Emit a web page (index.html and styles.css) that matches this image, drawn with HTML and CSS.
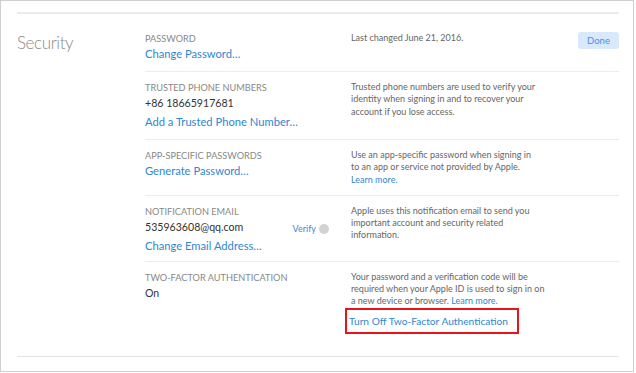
FILE: index.html
```html
<!DOCTYPE html>
<html lang="en">
<head>
<meta charset="utf-8">
<title>Security</title>
<link rel="stylesheet" href="styles.css">
</head>
<body>
<div class="frame">
  <div class="panel">
    <section class="section">
      <h2 class="heading">Security</h2>
      <div class="rows">
        <div class="row row-first">
          <div class="col-main">
            <div class="label">PASSWORD</div>
            <a class="link" href="#">Change Password…</a>
          </div>
          <div class="col-desc">
            <p class="desc">Last changed June 21, 2016.</p>
          </div>
          <button class="done" type="button">Done</button>
        </div>
        <div class="row">
          <div class="col-main">
            <div class="label">TRUSTED PHONE NUMBERS</div>
            <div class="value">+86 18665917681</div>
            <a class="link link-after" href="#">Add a Trusted Phone Number…</a>
          </div>
          <div class="col-desc">
            <p class="desc">Trusted phone numbers are used to verify your identity when signing in and to recover your account if you lose access.</p>
          </div>
        </div>
        <div class="row">
          <div class="col-main">
            <div class="label">APP-SPECIFIC PASSWORDS</div>
            <a class="link" href="#">Generate Password…</a>
          </div>
          <div class="col-desc">
            <p class="desc">Use an app-specific password when signing in to an app or service not provided by Apple. <a class="small-link" href="#">Learn more.</a></p>
          </div>
        </div>
        <div class="row row-tight">
          <div class="col-main">
            <div class="label">NOTIFICATION EMAIL</div>
            <div class="value value-verify">
              <span>535963608@qq.com</span>
              <span class="verify">Verify <span class="verify-dot"></span></span>
            </div>
            <a class="link link-after" href="#">Change Email Address…</a>
          </div>
          <div class="col-desc">
            <p class="desc">Apple uses this notification email to send you important account and security related information.</p>
          </div>
        </div>
        <div class="row row-last">
          <div class="col-main">
            <div class="label">TWO-FACTOR AUTHENTICATION</div>
            <div class="value">On</div>
          </div>
          <div class="col-desc col-desc-wide">
            <p class="desc">Your password and a verification code will be required when your Apple ID is used to sign in on a new device or browser. <a class="small-link" href="#">Learn more.</a></p>
            <div class="highlight"><a class="link link-small" href="#">Turn Off Two-Factor Authentication</a></div>
          </div>
        </div>
      </div>
    </section>
  </div>
</div>
</body>
</html>
```
FILE: styles.css
```css
* { box-sizing: border-box; }
html, body { margin: 0; padding: 0; background: #fff; }
body { font-family: Lato, "Open Sans", Arial, sans-serif; color: #333; }

.frame {
  width: 634px;
  height: 372px;
  border: 1px solid #cfcfcf;
  padding: 11px 14px 0 16px;
  overflow: hidden;
}
.panel {
  border-top: 2px solid #ececec;
  border-bottom: 1px solid #e3e3e3;
}
.section {
  display: flex;
  padding-top: 8px;
}
.heading {
  width: 128px;
  margin: 0;
  padding-top: 10px;
  font-size: 17px;
  line-height: 22px;
  font-weight: 300;
  letter-spacing: -0.4px;
  color: #8a8a8a;
}
.rows { flex: 1; }
.row {
  display: flex;
  align-items: flex-start;
  padding: 9px 0 9px;
  border-bottom: 1px solid #ececec;
}
.row-first { padding-top: 10px; }
.row-tight { padding-bottom: 7px; }
.row-last { border-bottom: none; padding-bottom: 22px; }
.col-main {
  width: 206px;
  padding-right: 22px;
  display: flex;
  flex-direction: column;
  align-items: flex-start;
}
.col-desc { width: 190px; }
.col-desc-wide { width: 198px; }
.label {
  font-size: 9.2px;
  line-height: 14px;
  color: #888;
}
.value {
  font-size: 10.6px;
  line-height: 16px;
  color: #333;
}
.value-verify {
  align-self: stretch;
  display: flex;
  justify-content: space-between;
  align-items: center;
  height: 16px;
}
.verify {
  display: flex;
  align-items: center;
  gap: 3px;
  font-size: 9px;
  line-height: 12px;
  color: #3b8ad3;
  margin-top: 4px;
}
.verify-dot {
  width: 10px;
  height: 10px;
  border-radius: 50%;
  background: #d2d2d2;
}
.link {
  font-size: 11.2px;
  line-height: 16px;
  color: #2f86d1;
  text-decoration: none;
}
.link-after { margin-top: 3px; }
.desc {
  margin: 0;
  font-size: 9px;
  line-height: 12.3px;
  color: #666;
}
.small-link { color: #2f86d1; text-decoration: none; }
.done {
  margin-left: auto;
  margin-top: 0;
  width: 41px;
  height: 17px;
  padding: 0;
  border: none;
  border-radius: 3px;
  background: #d7e9fb;
  color: #4a90e2;
  font-family: inherit;
  font-size: 9.5px;
}
.highlight {
  width: 174px;
  margin: 0 0 0 -6px;
  padding: 3px 0 3px 2px;
  border: 2px solid #e8141b;
}
.link-small { display: block; font-size: 10.2px; }
```
